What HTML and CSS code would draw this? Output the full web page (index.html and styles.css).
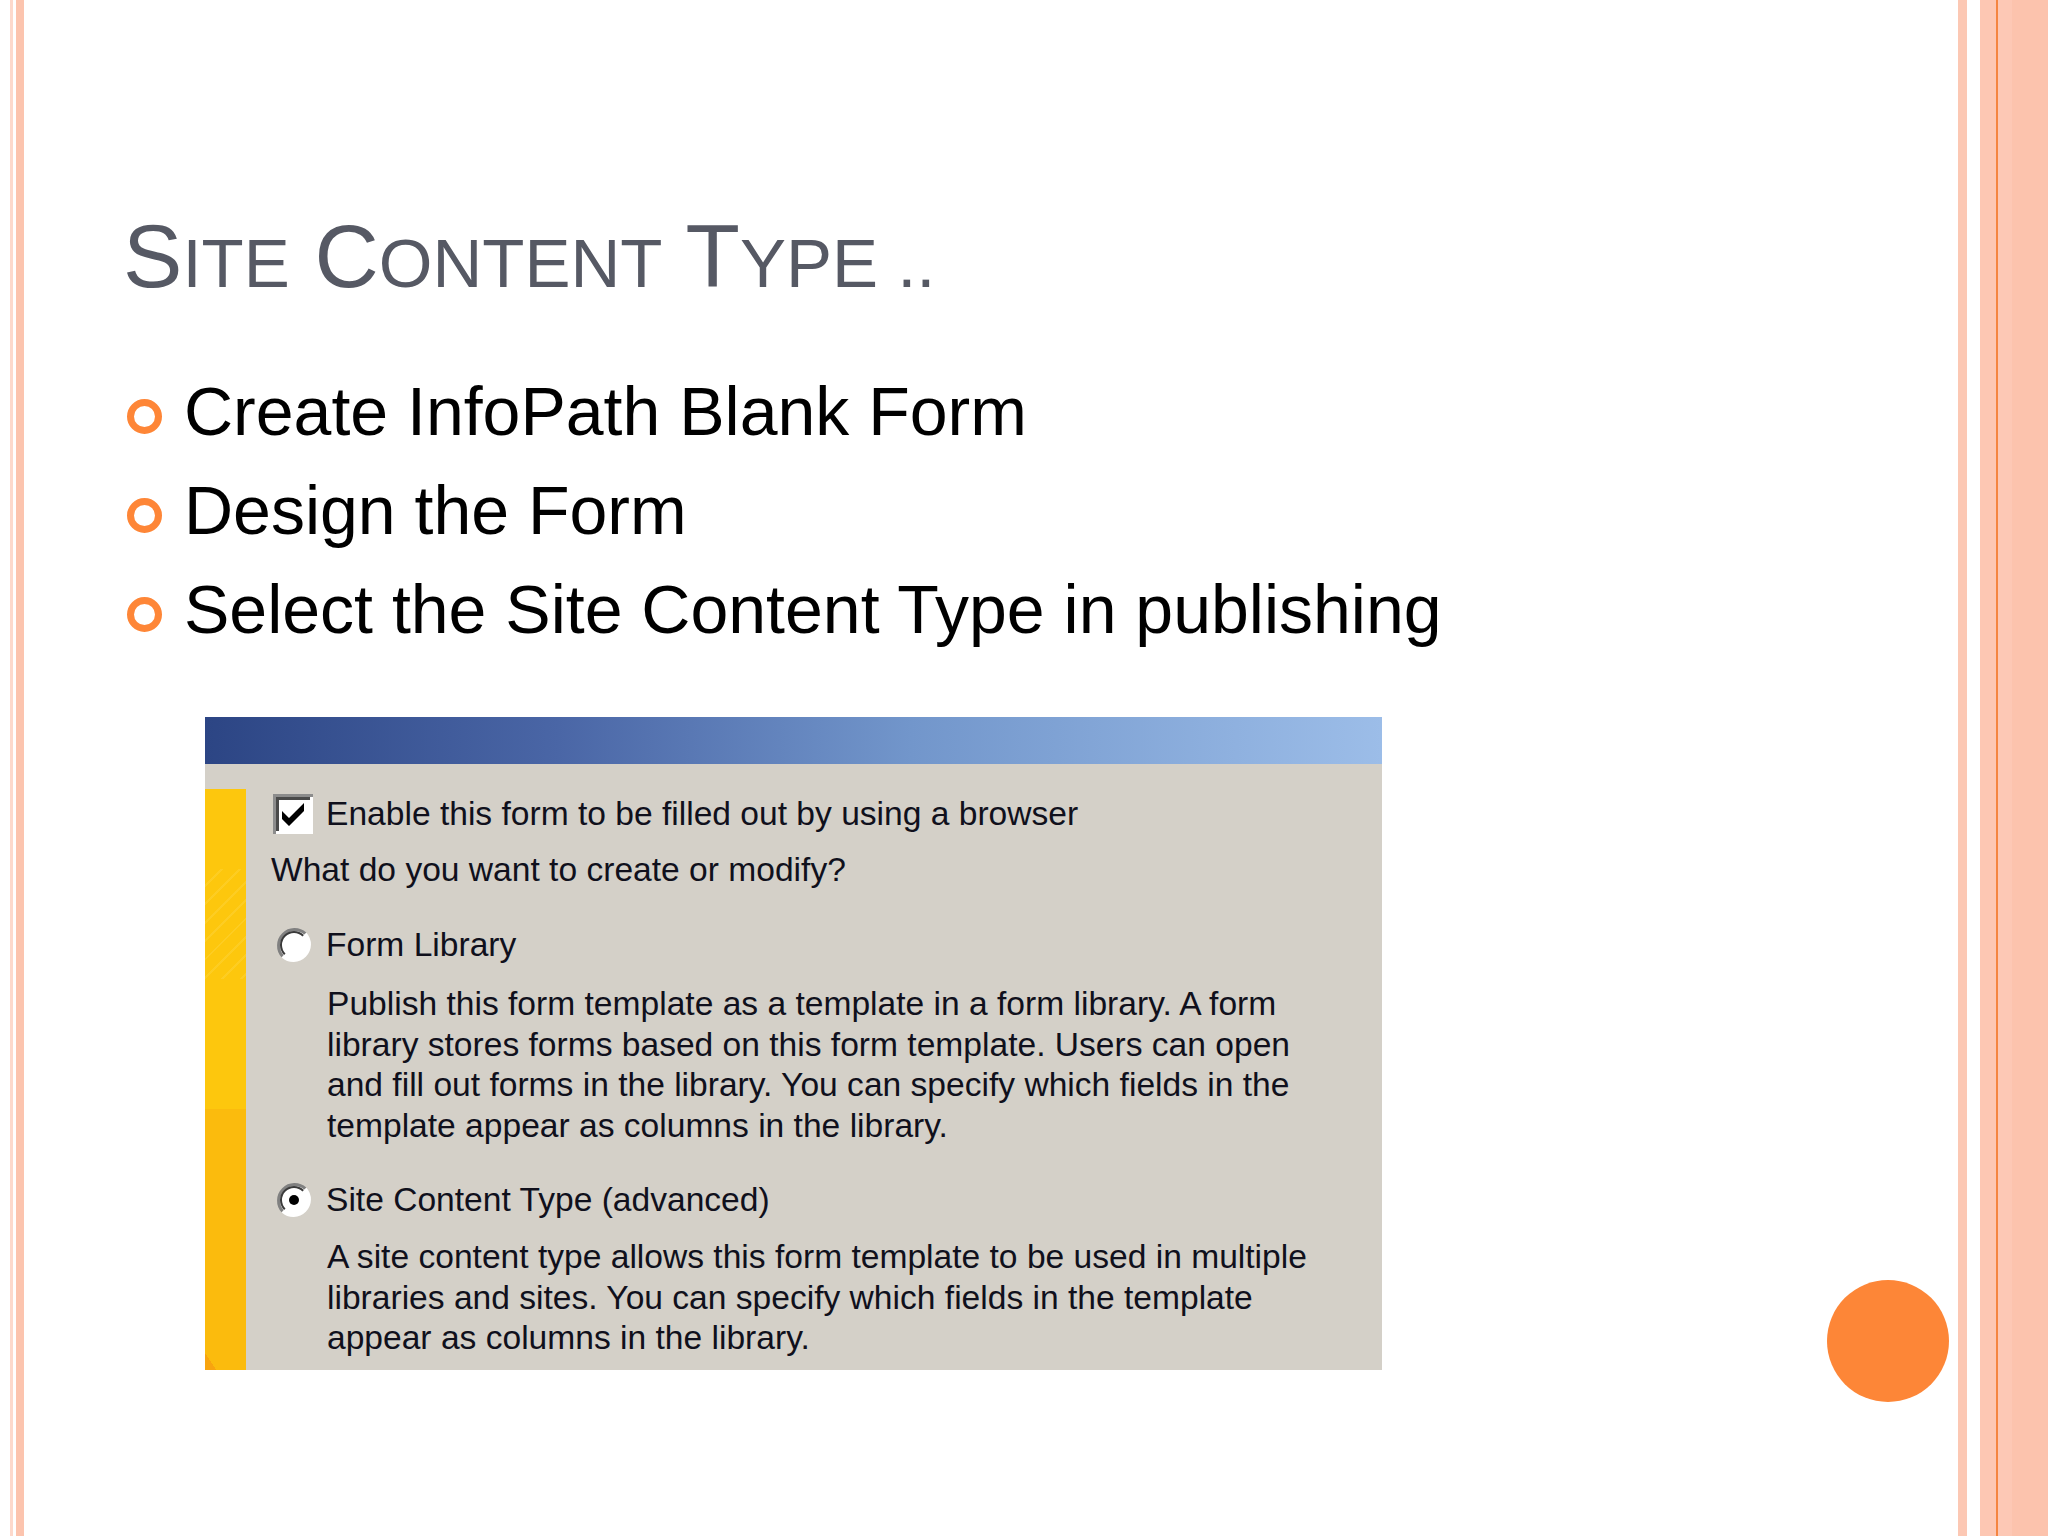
FILE: index.html
```html
<!DOCTYPE html>
<html lang="en">
<head>
<meta charset="utf-8">
<title>Site Content Type ..</title>
<link rel="stylesheet" href="styles.css">
</head>
<body>
<div class="slide">
  <div class="main">
    <h1 class="title"><span class="big">S</span><span class="small">ite</span> <span class="big">C</span><span class="small">ontent</span> <span class="big">T</span><span class="small">ype ..</span></h1>
    <ul class="bullets">
      <li>Create InfoPath Blank Form</li>
      <li>Design the Form</li>
      <li>Select the Site Content Type in publishing</li>
    </ul>
    <div class="dialog">
      <div class="dialog-bar"></div>
      <div class="dialog-body">
        <div class="dialog-side"></div>
        <div class="dialog-content">
          <div class="check-row">
            <svg class="checkbox" viewBox="0 0 40 40" width="40" height="40">
              <rect width="40" height="40" fill="#ffffff"/>
              <path d="M0 0H40V3H3V40H0Z" fill="#8c8c8c"/>
              <path d="M3 3H37V6H6V37H3Z" fill="#4a4a4a"/>
              <rect x="6" y="6" width="31" height="31" fill="#ffffff"/>
              <path d="M9 17 L16 24 L31 9 L31 17 L16 32 L9 25 Z" fill="#000000"/>
            </svg>
            <span>Enable this form to be filled out by using a browser</span>
          </div>
          <div class="question">What do you want to create or modify?</div>
          <div class="radio-row first">
            <svg class="radio" viewBox="0 0 36 36" width="36" height="36">
              <circle cx="18" cy="18" r="16" fill="#ffffff"/>
              <path d="M6.7 29.3 A16 16 0 0 1 29.3 6.7" fill="none" stroke="#808080" stroke-width="3"/>
              <path d="M29.3 6.7 A16 16 0 0 1 6.7 29.3" fill="none" stroke="#ffffff" stroke-width="3"/>
              <path d="M8.8 27.2 A13 13 0 0 1 27.2 8.8" fill="none" stroke="#3a3a3a" stroke-width="2"/>
            </svg>
            <span>Form Library</span>
          </div>
          <p class="desc">Publish this form template as a template in a form library. A form<br>library stores forms based on this form template. Users can open<br>and fill out forms in the library. You can specify which fields in the<br>template appear as columns in the library.</p>
          <div class="radio-row second">
            <svg class="radio" viewBox="0 0 36 36" width="36" height="36">
              <circle cx="18" cy="18" r="16" fill="#ffffff"/>
              <path d="M6.7 29.3 A16 16 0 0 1 29.3 6.7" fill="none" stroke="#808080" stroke-width="3"/>
              <path d="M29.3 6.7 A16 16 0 0 1 6.7 29.3" fill="none" stroke="#ffffff" stroke-width="3"/>
              <path d="M8.8 27.2 A13 13 0 0 1 27.2 8.8" fill="none" stroke="#3a3a3a" stroke-width="2"/>
              <circle cx="18" cy="18" r="5" fill="#000000"/>
            </svg>
            <span>Site Content Type (advanced)</span>
          </div>
          <p class="desc second-desc">A site content type allows this form template to be used in multiple<br>libraries and sites. You can specify which fields in the template<br>appear as columns in the library.</p>
        </div>
      </div>
    </div>
  </div>
  <div class="dot"></div>
</div>
</body>
</html>
```
FILE: styles.css
```css
html, body {
  margin: 0;
  padding: 0;
  background: #ffffff;
}

.slide {
  position: relative;
  width: 2048px;
  height: 1536px;
  overflow: hidden;
  background: linear-gradient(to right,
    #ffffff 0 10px,
    #fdd9cc 10px 13px,
    #ffffff 13px 16px,
    #fcc4ae 16px 24px,
    #ffffff 24px 1958px,
    #fcc8b4 1958px 1967px,
    #ffffff 1967px 1980px,
    #fdc7b3 1980px 1996px,
    #f58540 1996px 1998px,
    #fdc8b5 1998px 2012px,
    #fcc3ad 2012px 2048px);
  font-family: "Liberation Sans", Arial, sans-serif;
}

.main {
  padding: 206px 0 0 120px;
}

.title {
  margin: 0 0 0 3px;
  font-weight: normal;
  font-size: 89px;
  line-height: 100px;
  color: #565964;
  white-space: nowrap;
}

.title .small {
  font-size: 69px;
  text-transform: uppercase;
}

.bullets {
  list-style: none;
  margin: 48px 0 0 0;
  padding: 0 0 0 7px;
  font-size: 68px;
  line-height: 99px;
  color: #000000;
}

.bullets li::before {
  content: "";
  display: inline-block;
  box-sizing: border-box;
  width: 35px;
  height: 35px;
  border: 7px solid #fe8637;
  border-radius: 50%;
  margin-right: 22px;
  vertical-align: 1px;
}

.dialog {
  margin: 58px 0 0 85px;
  width: 1177px;
  background: #d4d0c8;
}

.dialog-bar {
  height: 47px;
  background: linear-gradient(to right, #2c4584 0%, #4a66a6 30%, #7296cb 60%, #9cbde8 100%);
}

.dialog-body {
  display: flex;
  padding-top: 25px;
}

.dialog-side {
  flex: none;
  width: 41px;
  background:
    linear-gradient(to top right, #f8a40f 0 14%, transparent 14%) bottom left / 41px 60px no-repeat,
    repeating-linear-gradient(135deg, transparent 0 11px, rgba(255, 225, 110, 0.22) 11px 13px) 0 80px / 41px 110px no-repeat,
    linear-gradient(to bottom, #fdc70d 0 55%, #fbbb0d 55% 100%);
}

.dialog-content {
  flex: 1;
  padding: 5px 0 11px 25px;
  font-size: 33.6px;
  line-height: 40px;
  color: #10101c;
}

.check-row {
  display: flex;
  align-items: center;
  gap: 13px;
  height: 40px;
}

.checkbox {
  display: block;
  flex: none;
  margin-left: 2px;
}

.question {
  margin-top: 16px;
}

.radio-row {
  display: flex;
  align-items: center;
  gap: 14px;
  height: 40px;
}

.radio-row.first {
  margin-top: 35px;
}

.radio-row.second {
  margin-top: 34px;
}

.radio {
  display: block;
  flex: none;
  margin-left: 5px;
}

.desc {
  margin: 19px 0 0 56px;
  line-height: 40.5px;
  white-space: nowrap;
}

.desc.second-desc {
  margin-top: 17px;
}

.dot {
  position: absolute;
  left: 1827px;
  top: 1280px;
  width: 122px;
  height: 122px;
  border-radius: 50%;
  background: #fd8637;
}
```
